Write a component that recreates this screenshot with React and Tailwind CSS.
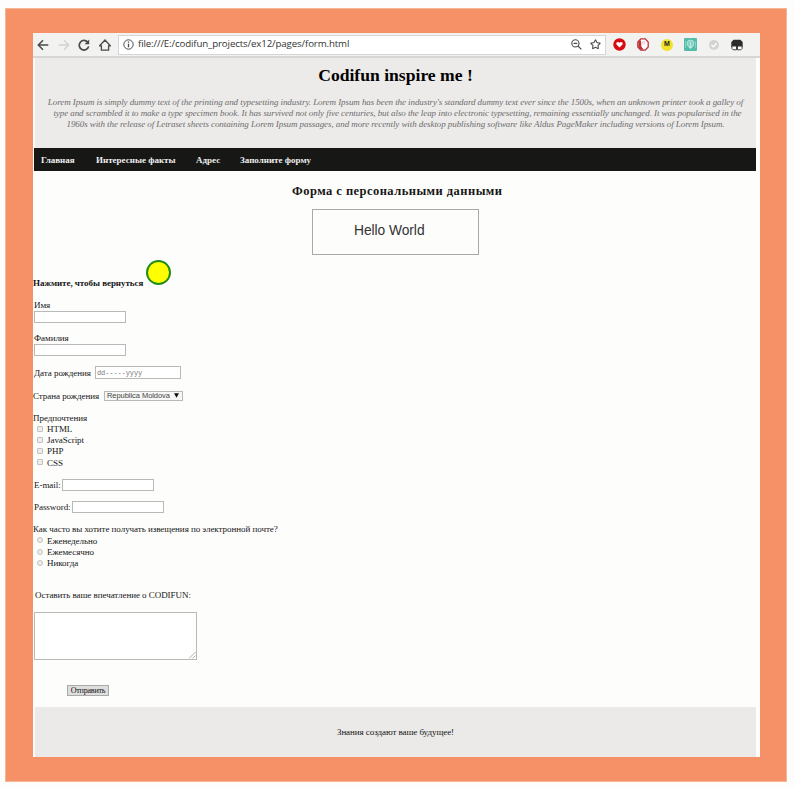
import React from "react";
import { Star } from "lucide-react";

const line = "h-[11px] leading-[11px] whitespace-nowrap";
const lowLine = "h-[11px] leading-[13px] whitespace-nowrap";
const field = "border border-[#b9b9b9] bg-white outline-none h-[12px] w-[92px] text-[8px] block";

function Toolbar() {
  return (
    <div className="flex h-[25px] shrink-0 items-center border-b-2 border-[#d6d6d5] bg-[#f2f2f1] text-[#4a4a4a]">
      <svg className="ml-[4px] h-[12px] w-[12px]" viewBox="0 0 12 12" fill="none" stroke="currentColor" strokeWidth="1.5">
        <path d="M11.3 6H1.5M6 1.3 1.3 6 6 10.7" />
      </svg>
      <svg className="ml-[9px] h-[12px] w-[12px] text-[#d2d2d2]" viewBox="0 0 12 12" fill="none" stroke="currentColor" strokeWidth="1.4">
        <path d="M.7 6h9.8M6 1.3 10.7 6 6 10.7" />
      </svg>
      <svg className="ml-[8px] h-[12px] w-[12px]" viewBox="0 0 12 12" fill="none">
        <path d="M9.8 3.2A4.8 4.8 0 1 0 10.7 7.4" stroke="currentColor" strokeWidth="1.7" />
        <path d="M11.2.6v4.7H6.5z" fill="currentColor" />
      </svg>
      <svg className="ml-[9px] h-[12px] w-[12px]" viewBox="0 0 12 12" fill="none" stroke="currentColor" strokeWidth="1.3">
        <path d="M.6 6.8 6 1l5.4 5.8H9.6v4.3H2.4V6.8z" />
      </svg>
      <div className="ml-[7px] flex h-[20px] w-[488px] items-center border border-[#d6d6d6] bg-white">
        <svg className="ml-[4px] h-[11px] w-[11px]" viewBox="0 0 11 11" fill="none" stroke="currentColor">
          <circle cx="5.5" cy="5.5" r="4.7" />
          <path d="M5.5 4.8v3.4M5.5 2.6v1.2" strokeWidth="1.3" />
        </svg>
        <span className="ml-[4px] whitespace-nowrap font-['Open_Sans','Noto_Sans',sans-serif] text-[9.7px] tracking-[-0.12px] text-[#333]">
          file:///E:/codifun_projects/ex12/pages/form.html
        </span>
        <svg className="ml-auto h-[11px] w-[11px]" viewBox="0 0 11 11" fill="none" stroke="currentColor" strokeWidth="1.1">
          <circle cx="4.4" cy="4.4" r="3.6" />
          <path d="m7 7 3.4 3.4M2.6 4.4h3.6" />
        </svg>
        <Star className="ml-[8px] mr-[4px] h-[11px] w-[11px]" strokeWidth={2.4} />
      </div>
      <svg className="ml-[7px] h-[13px] w-[13px]" viewBox="0 0 13 13">
        <circle cx="6.5" cy="6.5" r="6.2" fill="#d90b12" />
        <path d="M6.5 9.6 3.5 6.5C2.4 5 4.9 2.8 6.5 4.8 8.1 2.8 10.6 5 9.5 6.5z" fill="#fff" />
      </svg>
      <svg className="ml-[11px] h-[13px] w-[12px]" viewBox="0 0 12 13">
        <path d="M3.8 .9h4.4l3 3.2v4.8l-3 3.2H3.8l-3-3.2V4.1z" fill="#fff" stroke="#bd3035" strokeWidth="1.3" />
        <path d="M3.4 1.8 1.4 4v5l2.6 2.8h2.6L4.2 8.2V4.4z" fill="#bd3035" />
        <path d="M5.8 3v3.500M7.300 2.800v3.500" stroke="#d98a8d" strokeWidth=".5" />
      </svg>
      <div className="ml-[12px] flex h-[12px] w-[12px] items-center justify-center rounded-full bg-[#f2e22c] font-['Liberation_Sans',sans-serif] text-[7px] font-bold text-[#222]">
        M
      </div>
      <svg className="ml-[11px] h-[13px] w-[13px]" viewBox="0 0 13 13">
        <rect width="13" height="13" rx="1" fill="#54bda8" />
        <circle cx="6.5" cy="5.5" r="3.4" fill="#83d2c3" stroke="#c4ebe3" strokeWidth=".8" />
        <path d="M6.5 4v7M4.8 9.5h3.4" stroke="#c4ebe3" strokeWidth=".9" />
        <path d="M1.5 3v7M11.500 3v7" stroke="#83d2c3" />
      </svg>
      <svg className="ml-[12px] h-[10px] w-[10px]" viewBox="0 0 10 10">
        <circle cx="5" cy="5" r="5" fill="#d3d3d3" />
        <path d="m2.5 5 1.9 1.9 3.2-3.7" fill="none" stroke="#fff" strokeWidth="1.3" />
      </svg>
      <svg className="ml-[12px] h-[12px] w-[12px]" viewBox="0 0 12 12">
        <path d="M2.600 .7h6.800L11.700 3v4.700H.3V3z" fill="#2d2d2d" />
        <path d="M.9 7h4.600v3.800H2.200L.9 9.500zM6.500 7h4.600v2.500l-1.300 1.300H6.500z" fill="#fff" stroke="#2d2d2d" strokeWidth=".9" />
      </svg>
    </div>
  );
}

function Option({ type, children }) {
  return (
    <label className="flex h-[11.2px] items-center pl-[3px] leading-[13px]">
      <span
        className={
          "mr-[4px] h-[6px] w-[6px] border border-[#c2c2c2] bg-[#ededed] " +
          (type === "radio" ? "rounded-full" : "rounded-[1px]")
        }
      />
      <span className="h-[11px] whitespace-nowrap">{children}</span>
    </label>
  );
}

export default function App() {
  return (
    <div className="h-[788px] w-[795px] overflow-hidden bg-[#fdfdfd] pl-[5px] pt-[8px] font-['Liberation_Serif',serif] text-[9px] text-[#151515]">
      <div className="h-[774px] w-[782px] border border-[#f3b795] bg-[#f69066] pl-[27px] pt-[24px]">
        <div className="flex h-[724px] w-[727px] flex-col bg-[#fdfdfc]">
          <Toolbar />
          <header className="ml-[2px] h-[90px] w-[721px] bg-[#ecebea] pt-[7px] text-center">
            <h1 className="h-[20px] whitespace-nowrap text-[17.6px] font-bold leading-[20px] text-black">Codifun inspire me !</h1>
            <div className="mt-[12px] whitespace-nowrap text-[9px] italic leading-[11.2px] tracking-[-0.08px] text-[#6c6c6c]">
              <p>
                Lorem Ipsum is simply dummy text of the printing and typesetting industry. Lorem Ipsum has been the industry's standard dummy text ever since the 1500s, when an unknown printer took a galley of
              </p>
              <p className="pl-[4px]">
                type and scrambled it to make a type specimen book. It has survived not only five centuries, but also the leap into electronic typesetting, remaining essentially unchanged. It was popularised in the
              </p>
              <p>
                1960s with the release of Letraset sheets containing Lorem Ipsum passages, and more recently with desktop publishing software like Aldus PageMaker including versions of Lorem Ipsum.
              </p>
            </div>
          </header>
          <nav className="ml-[1px] flex h-[23px] w-[722px] items-center whitespace-nowrap bg-[#171716] pl-[7px] pt-[2px] text-[9px] font-bold text-[#eee]">
            <a className="w-[55px]">Главная</a>
            <a className="w-[100px]">Интересные факты</a>
            <a className="w-[44px]">Адрес</a>
            <a>Заполните форму</a>
          </nav>

          <main className="flex flex-col items-start pl-[1px] tracking-[-0.05px]">
            <h2 className="ml-[258px] mt-[12px] h-[16px] whitespace-nowrap text-[12.5px] font-bold leading-[16px] tracking-[0.46px]">
              Форма с персональными данными
            </h2>
            <div className="ml-[278px] mt-[10px] flex h-[46px] w-[167px] items-center border border-[#a9a9a9] pb-[2px] pl-[41px] font-['Liberation_Sans',sans-serif] text-[13.8px] text-[#333]">
              Hello World
            </div>
            <div className="mt-[5px] flex h-[29px]">
              <p className={line + " -ml-px mt-[18px] w-[113px] font-bold"}>Нажмите, чтобы вернуться</p>
              <span className="h-[25px] w-[25px] rounded-full border-2 border-[#238a1c] bg-[#ffff00]" />
            </div>

            <p className={line + " mt-[11px]"}>Имя</p>
            <input className={field} />
            <p className={line + " mt-[10px]"}>Фамилия</p>
            <input className={field} />

            <div className="mt-[10px] flex h-[13px] items-center">
              <p className={lowLine + " w-[61px]"}>Дата рождения</p>
              <div className="h-[13px] w-[86px] border border-[#b9b9b9] bg-white pl-[1px] font-['Liberation_Mono',monospace] text-[7px] leading-[12px] tracking-[-0.1px] text-[#777]">
                dd-----yyyy
              </div>
            </div>

            <div className="-ml-px mt-[11px] flex h-[11px] items-center">
              <p className={lowLine + " w-[71px]"}>Страна рождения</p>
              <div className="flex h-[10px] w-[79px] items-center justify-between whitespace-nowrap border border-[#b9b9b9] bg-[#f7f7f7] pl-[2px] pr-[3px] font-['Liberation_Sans',sans-serif] text-[7.5px] leading-[8px] text-[#444]">
                Republica Moldova
                <svg className="h-[5px] w-[5px]" viewBox="0 0 6 6">
                  <path d="M0 .3h6L3 5.7z" fill="#111" />
                </svg>
              </div>
            </div>

            <p className={lowLine + " -ml-px mt-[11px]"}>Предпочтения</p>
            <Option type="checkbox">HTML</Option>
            <Option type="checkbox">JavaScript</Option>
            <Option type="checkbox">PHP</Option>
            <Option type="checkbox">CSS</Option>

            <div className="mt-[11px] flex h-[12px] items-center">
              <p className={lowLine + " w-[28px]"}>E-mail:</p>
              <input className={field} />
            </div>
            <div className="mt-[10px] flex h-[12px] items-center">
              <p className={lowLine + " w-[38px]"}>Password:</p>
              <input className={field} />
            </div>

            <p className={line + " -ml-px mt-[11px]"}>Как часто вы хотите получать извещения по электронной почте?</p>
            <Option type="radio">Еженедельно</Option>
            <Option type="radio">Ежемесячно</Option>
            <Option type="radio">Никогда</Option>

            <p className={lowLine + " mt-[21px] pl-[1px]"}>Оставить ваше впечатление о CODIFUN:</p>
            <div className="mt-[12px] flex h-[48px] w-[163px] items-end justify-end border border-[#b9b9b9] bg-white">
              <svg className="h-[7px] w-[7px]" viewBox="0 0 7 7" stroke="#999" strokeWidth=".8">
                <path d="M0 6.5 6.5 0M3.5 6.5l3-3" />
              </svg>
            </div>
            <button className="ml-[33px] mt-[25px] h-[11px] w-[42px] whitespace-nowrap border border-[#aaa] bg-[#dededd] text-[8px] leading-[8px] tracking-[-0.2px] text-[#111]">
              Отправить
            </button>
          </main>

          <footer className="ml-[2px] mt-auto flex h-[50px] w-[721px] items-center justify-center bg-[#ebeae9] pt-[2px] text-[9px] tracking-[-0.07px]">
            Знания создают ваше будущее!
          </footer>
        </div>
      </div>
    </div>
  );
}
